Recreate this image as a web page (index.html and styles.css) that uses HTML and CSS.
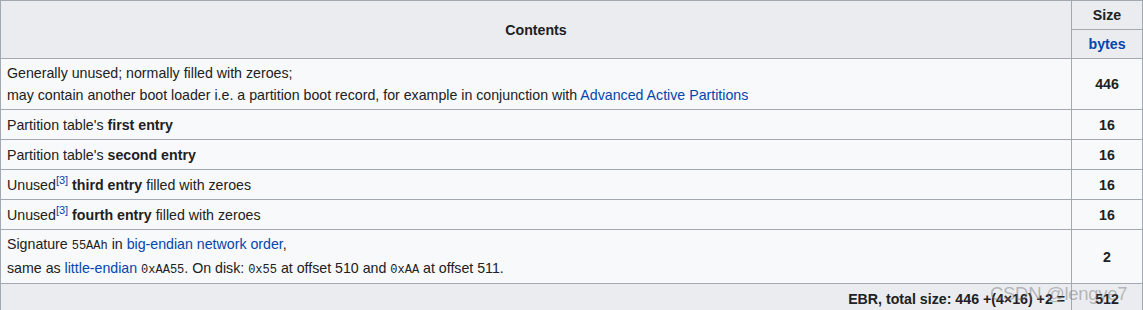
FILE: index.html
```html
<!DOCTYPE html>
<html>
<head>
<meta charset="utf-8">
<link rel="stylesheet" href="styles.css">
</head>
<body>
<div class="wrap">
<table class="wikitable">
  <tr class="h1">
    <th rowspan="2" class="contents">Contents</th>
    <th class="size">Size</th>
  </tr>
  <tr class="h2">
    <th class="size"><a href="#">bytes</a></th>
  </tr>
  <tr class="r2">
    <td>Generally unused; normally filled with zeroes;<br>may contain another boot loader i.e. a partition boot record, for example in conjunction with <a href="#">Advanced Active Partitions</a></td>
    <td class="num">446</td>
  </tr>
  <tr class="r1">
    <td>Partition table's <b>first entry</b></td>
    <td class="num">16</td>
  </tr>
  <tr class="r1">
    <td>Partition table's <b>second entry</b></td>
    <td class="num">16</td>
  </tr>
  <tr class="r1">
    <td>Unused<sup><a href="#">[3]</a></sup> <b>third entry</b> filled with zeroes</td>
    <td class="num">16</td>
  </tr>
  <tr class="r1">
    <td>Unused<sup><a href="#">[3]</a></sup> <b>fourth entry</b> filled with zeroes</td>
    <td class="num">16</td>
  </tr>
  <tr class="r3">
    <td>Signature <code>55AAh</code> in <a href="#">big-endian network order</a>,<br>same as <a href="#">little-endian</a> <code>0xAA55</code>. On disk: <code>0x55</code> at offset 510 and <code>0xAA</code> at offset 511.</td>
    <td class="num">2</td>
  </tr>
  <tr class="foot">
    <th class="total">EBR, total size: 446 +(4×16) +2 =</th>
    <th class="size">512</th>
  </tr>
</table>
<div class="watermark">CSDN @lengye7</div>
</div>
</body>
</html>
```

FILE: styles.css
```css
html, body {
  margin: 0;
  padding: 0;
  background: #ffffff;
}
.wrap {
  position: relative;
  width: 1143px;
  height: 310px;
  overflow: hidden;
}
.wikitable {
  border-collapse: collapse;
  width: 1143px;
  font-family: "Liberation Sans", Arial, sans-serif;
  font-size: 14.2px;
  color: #202122;
  background: #f8f9fa;
  table-layout: fixed;
}
.wikitable th, .wikitable td {
  border: 1px solid #a2a9b1;
  padding: 0 6px;
  line-height: 22px;
}
.wikitable th {
  background: #eaecf0;
  font-weight: bold;
  text-align: center;
}
.wikitable td {
  text-align: left;
  vertical-align: middle;
}
.wikitable .size {
  width: 58px;
}
.wikitable td.num {
  text-align: center;
  font-weight: bold;
}
.h1 { height: 29px; }
.h2 { height: 29px; }
.r1 { height: 30px; }
.r2 { height: 51px; }
.r3 { height: 54px; }
.foot { height: 30px; }
.foot th { vertical-align: middle; }
.wikitable th.total {
  text-align: right;
}
a {
  color: #0645ad;
  text-decoration: none;
}
sup {
  font-size: 11px;
  line-height: 1;
  vertical-align: 6px;
}
code {
  font-family: "Liberation Mono", "Courier New", monospace;
  font-size: 12px;
  color: #202122;
}
.watermark {
  position: absolute;
  left: 990px;
  top: 283px;
  font-family: "Liberation Sans", Arial, sans-serif;
  font-size: 18.5px;
  color: rgba(110, 110, 110, 0.45);
  letter-spacing: -0.3px;
  white-space: nowrap;
}
```
